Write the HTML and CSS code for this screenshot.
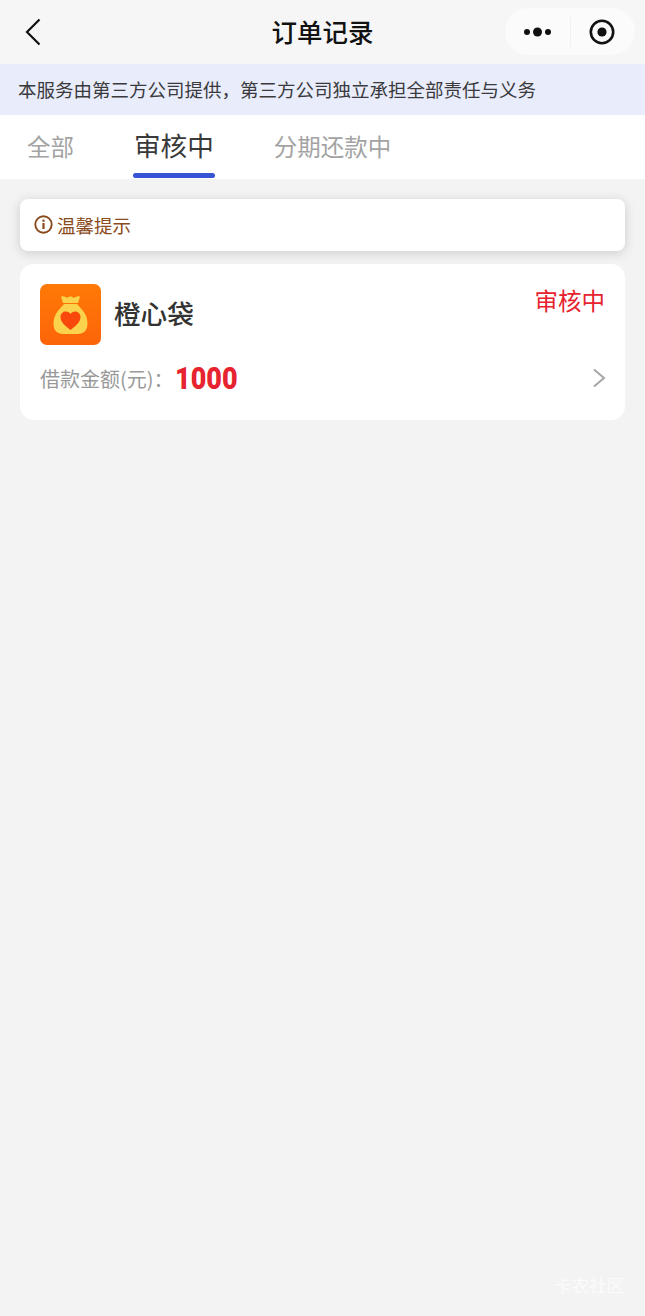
FILE: index.html
```html
<!DOCTYPE html>
<html lang="zh-CN">
<head>
    <meta charset="UTF-8">
    <meta name="viewport" content="width=device-width, initial-scale=1.0">
    <title>订单记录</title>
    <link rel="stylesheet" href="styles.css">
</head>
<body>
    <div class="page">
        <div class="navbar">
            <div class="nav-left">
                <svg class="back-icon" width="18" height="28" viewBox="0 0 18 28">
                    <path d="M15.5 1.5 L3 14 L15.5 26.5" fill="none" stroke="#111" stroke-width="2.2"/>
                </svg>
            </div>
            <div class="nav-title">订单记录</div>
            <div class="nav-right">
                <div class="capsule">
                    <svg class="more-icon" width="30" height="12" viewBox="0 0 30 12">
                        <circle cx="4" cy="6" r="3" fill="#111"/>
                        <circle cx="14.5" cy="6" r="4.5" fill="#111"/>
                        <circle cx="25" cy="6" r="3" fill="#111"/>
                    </svg>
                    <span class="capsule-line"></span>
                    <svg class="target-icon" width="26" height="26" viewBox="0 0 26 26">
                        <circle cx="13" cy="13" r="11.2" fill="none" stroke="#111" stroke-width="2.6"/>
                        <circle cx="13" cy="13" r="4.6" fill="#111"/>
                    </svg>
                </div>
            </div>
        </div>

        <div class="notice">本服务由第三方公司提供，第三方公司独立承担全部责任与义务</div>

        <div class="tabs">
            <div class="tab">全部</div>
            <div class="tab tab-active">审核中</div>
            <div class="tab">分期还款中</div>
        </div>

        <div class="content">
            <div class="tip">
                <svg class="tip-icon" width="19" height="19" viewBox="0 0 19 19">
                    <circle cx="9.5" cy="9.5" r="8.2" fill="none" stroke="#8a4a1c" stroke-width="1.9"/>
                    <rect x="8.4" y="8" width="2.2" height="6" fill="#8a4a1c"/>
                    <rect x="8.4" y="4.6" width="2.2" height="2.2" fill="#8a4a1c"/>
                </svg>
                <span>温馨提示</span>
            </div>

            <div class="order-card">
                <div class="order-top">
                    <div class="product">
                        <svg class="product-logo" width="61" height="61" viewBox="0 0 61 61">
                            <defs>
                                <linearGradient id="logoBg" x1="0" y1="0" x2="0" y2="1">
                                    <stop offset="0" stop-color="#ff7a06"/>
                                    <stop offset="1" stop-color="#fd6408"/>
                                </linearGradient>
                            </defs>
                            <rect width="61" height="61" rx="7" fill="url(#logoBg)"/>
                            <path d="M21 12.5 C24 11.5 26 13 27.5 14 C28.5 12 32.5 12 33.5 14 C35 13 37.5 11.5 40 12.5 L38 19 L23 19 Z" fill="#fbd24c"/>
                            <path d="M24 20 L37 20 C40 24 47.5 29 47.5 39.5 C47.5 46.5 43.5 50 38 50 L23 50 C17.5 50 13.5 46.5 13.5 39.5 C13.5 29 21 24 24 20 Z" fill="#fbd24c"/>
                            <path d="M30.5 46 C25.5 42 20.5 38.5 20.5 33 C20.5 29.5 23.2 27.5 26 27.5 C28 27.5 29.6 28.5 30.5 30 C31.4 28.5 33 27.5 35 27.5 C37.8 27.5 40.5 29.5 40.5 33 C40.5 38.5 35.5 42 30.5 46 Z" fill="#f8480c"/>
                        </svg>
                        <span class="product-name">橙心袋</span>
                    </div>
                    <span class="order-status">审核中</span>
                </div>
                <div class="order-bottom">
                    <span class="amount-label">借款金额(元)：</span>
                    <span class="amount">1000</span>
                    <svg class="arrow-icon" width="14" height="20" viewBox="0 0 14 20">
                        <path d="M2 1.5 L12 10 L2 18.5" fill="none" stroke="#a6a6a6" stroke-width="2"/>
                    </svg>
                </div>
            </div>
        </div>

        <div class="watermark">卡农社区</div>
    </div>
</body>
</html>
```

FILE: styles.css
```css
* {
    box-sizing: border-box;
}
body {
    margin: 0;
    padding: 0;
    font-family: "Noto Sans CJK SC", "Noto Sans", sans-serif;
    background-color: #f3f3f3;
}
.page {
    position: relative;
    width: 645px;
    height: 1316px;
    overflow: hidden;
    display: flex;
    flex-direction: column;
}
.navbar {
    height: 64px;
    flex-shrink: 0;
    display: grid;
    grid-template-columns: 1fr auto 1fr;
    align-items: center;
    background-color: #f6f6f6;
    padding: 0 10px;
}
.nav-left {
    display: flex;
    align-items: center;
}
.back-icon {
    display: block;
    margin-left: 14px;
    margin-bottom: 1px;
}
.nav-title {
    font-size: 25.5px;
    font-weight: 500;
    line-height: 34px;
    color: #111;
    margin-bottom: 2px;
}
.nav-right {
    display: flex;
    justify-content: flex-end;
}
.capsule {
    width: 130px;
    height: 47px;
    margin-bottom: 1px;
    display: flex;
    align-items: center;
    background-color: #fbfbfb;
    border-radius: 24px;
    padding-left: 18px;
}
.more-icon {
    display: block;
}
.capsule-line {
    width: 1px;
    height: 30px;
    margin-left: 17px;
    background-color: #f0f0f0;
}
.target-icon {
    display: block;
    margin-left: 18px;
}
.notice {
    height: 51px;
    flex-shrink: 0;
    padding-left: 18px;
    font-size: 18.5px;
    line-height: 51px;
    color: #3a3a3c;
    background-color: #e8ecfb;
    white-space: nowrap;
}
.tabs {
    height: 64px;
    flex-shrink: 0;
    display: flex;
    background-color: #fff;
    padding-left: 27px;
}
.tab {
    position: relative;
    margin-right: 60px;
    font-size: 23.5px;
    line-height: 62px;
    color: #a3a3a3;
    white-space: nowrap;
}
.tab-active {
    font-size: 26.6px;
    line-height: 60px;
    color: #3a3a3a;
}
.tab-active::after {
    content: "";
    position: absolute;
    left: -1px;
    right: -1px;
    bottom: 1px;
    height: 5px;
    border-radius: 3px;
    background-color: #3754d4;
}
.content {
    flex: 1;
    padding: 20px 20px 0;
}
.tip {
    height: 52px;
    display: flex;
    align-items: center;
    gap: 4px;
    padding-left: 14px;
    background-color: #fff;
    border-radius: 8px;
    box-shadow: 0 2px 12px rgba(0, 0, 0, 0.16);
    font-size: 18.5px;
    line-height: 26px;
    color: #8a4a1c;
}
.tip span {
    margin-bottom: 1px;
}
.tip-icon {
    display: block;
    margin-bottom: 1px;
}
.order-card {
    height: 156px;
    margin-top: 13px;
    padding: 20px 20px 0;
    background-color: #fff;
    border-radius: 14px;
}
.order-top {
    display: flex;
    justify-content: space-between;
    align-items: flex-start;
}
.product {
    display: flex;
    align-items: center;
    gap: 13px;
}
.product-logo {
    display: block;
}
.product-name {
    font-size: 26.6px;
    font-weight: 500;
    margin-bottom: 5px;
    color: #333;
}
.order-status {
    margin-top: -1px;
    font-size: 23.5px;
    line-height: 34px;
    color: #e6232e;
}
.order-bottom {
    display: flex;
    align-items: center;
    height: 40px;
    margin-top: 13px;
}
.amount-label {
    width: 135px;
    font-size: 20px;
    color: #999;
    white-space: nowrap;
}
.amount {
    font-family: Roboto, sans-serif;
    font-size: 31px;
    font-weight: 900;
    color: #e6232e;
    transform: scaleX(0.87);
    transform-origin: left center;
}
.arrow-icon {
    display: block;
    margin-left: auto;
    margin-right: -1px;
}
.watermark {
    position: absolute;
    right: 21px;
    bottom: 19px;
    font-size: 17.5px;
    color: #fbfbfb;
}
```
